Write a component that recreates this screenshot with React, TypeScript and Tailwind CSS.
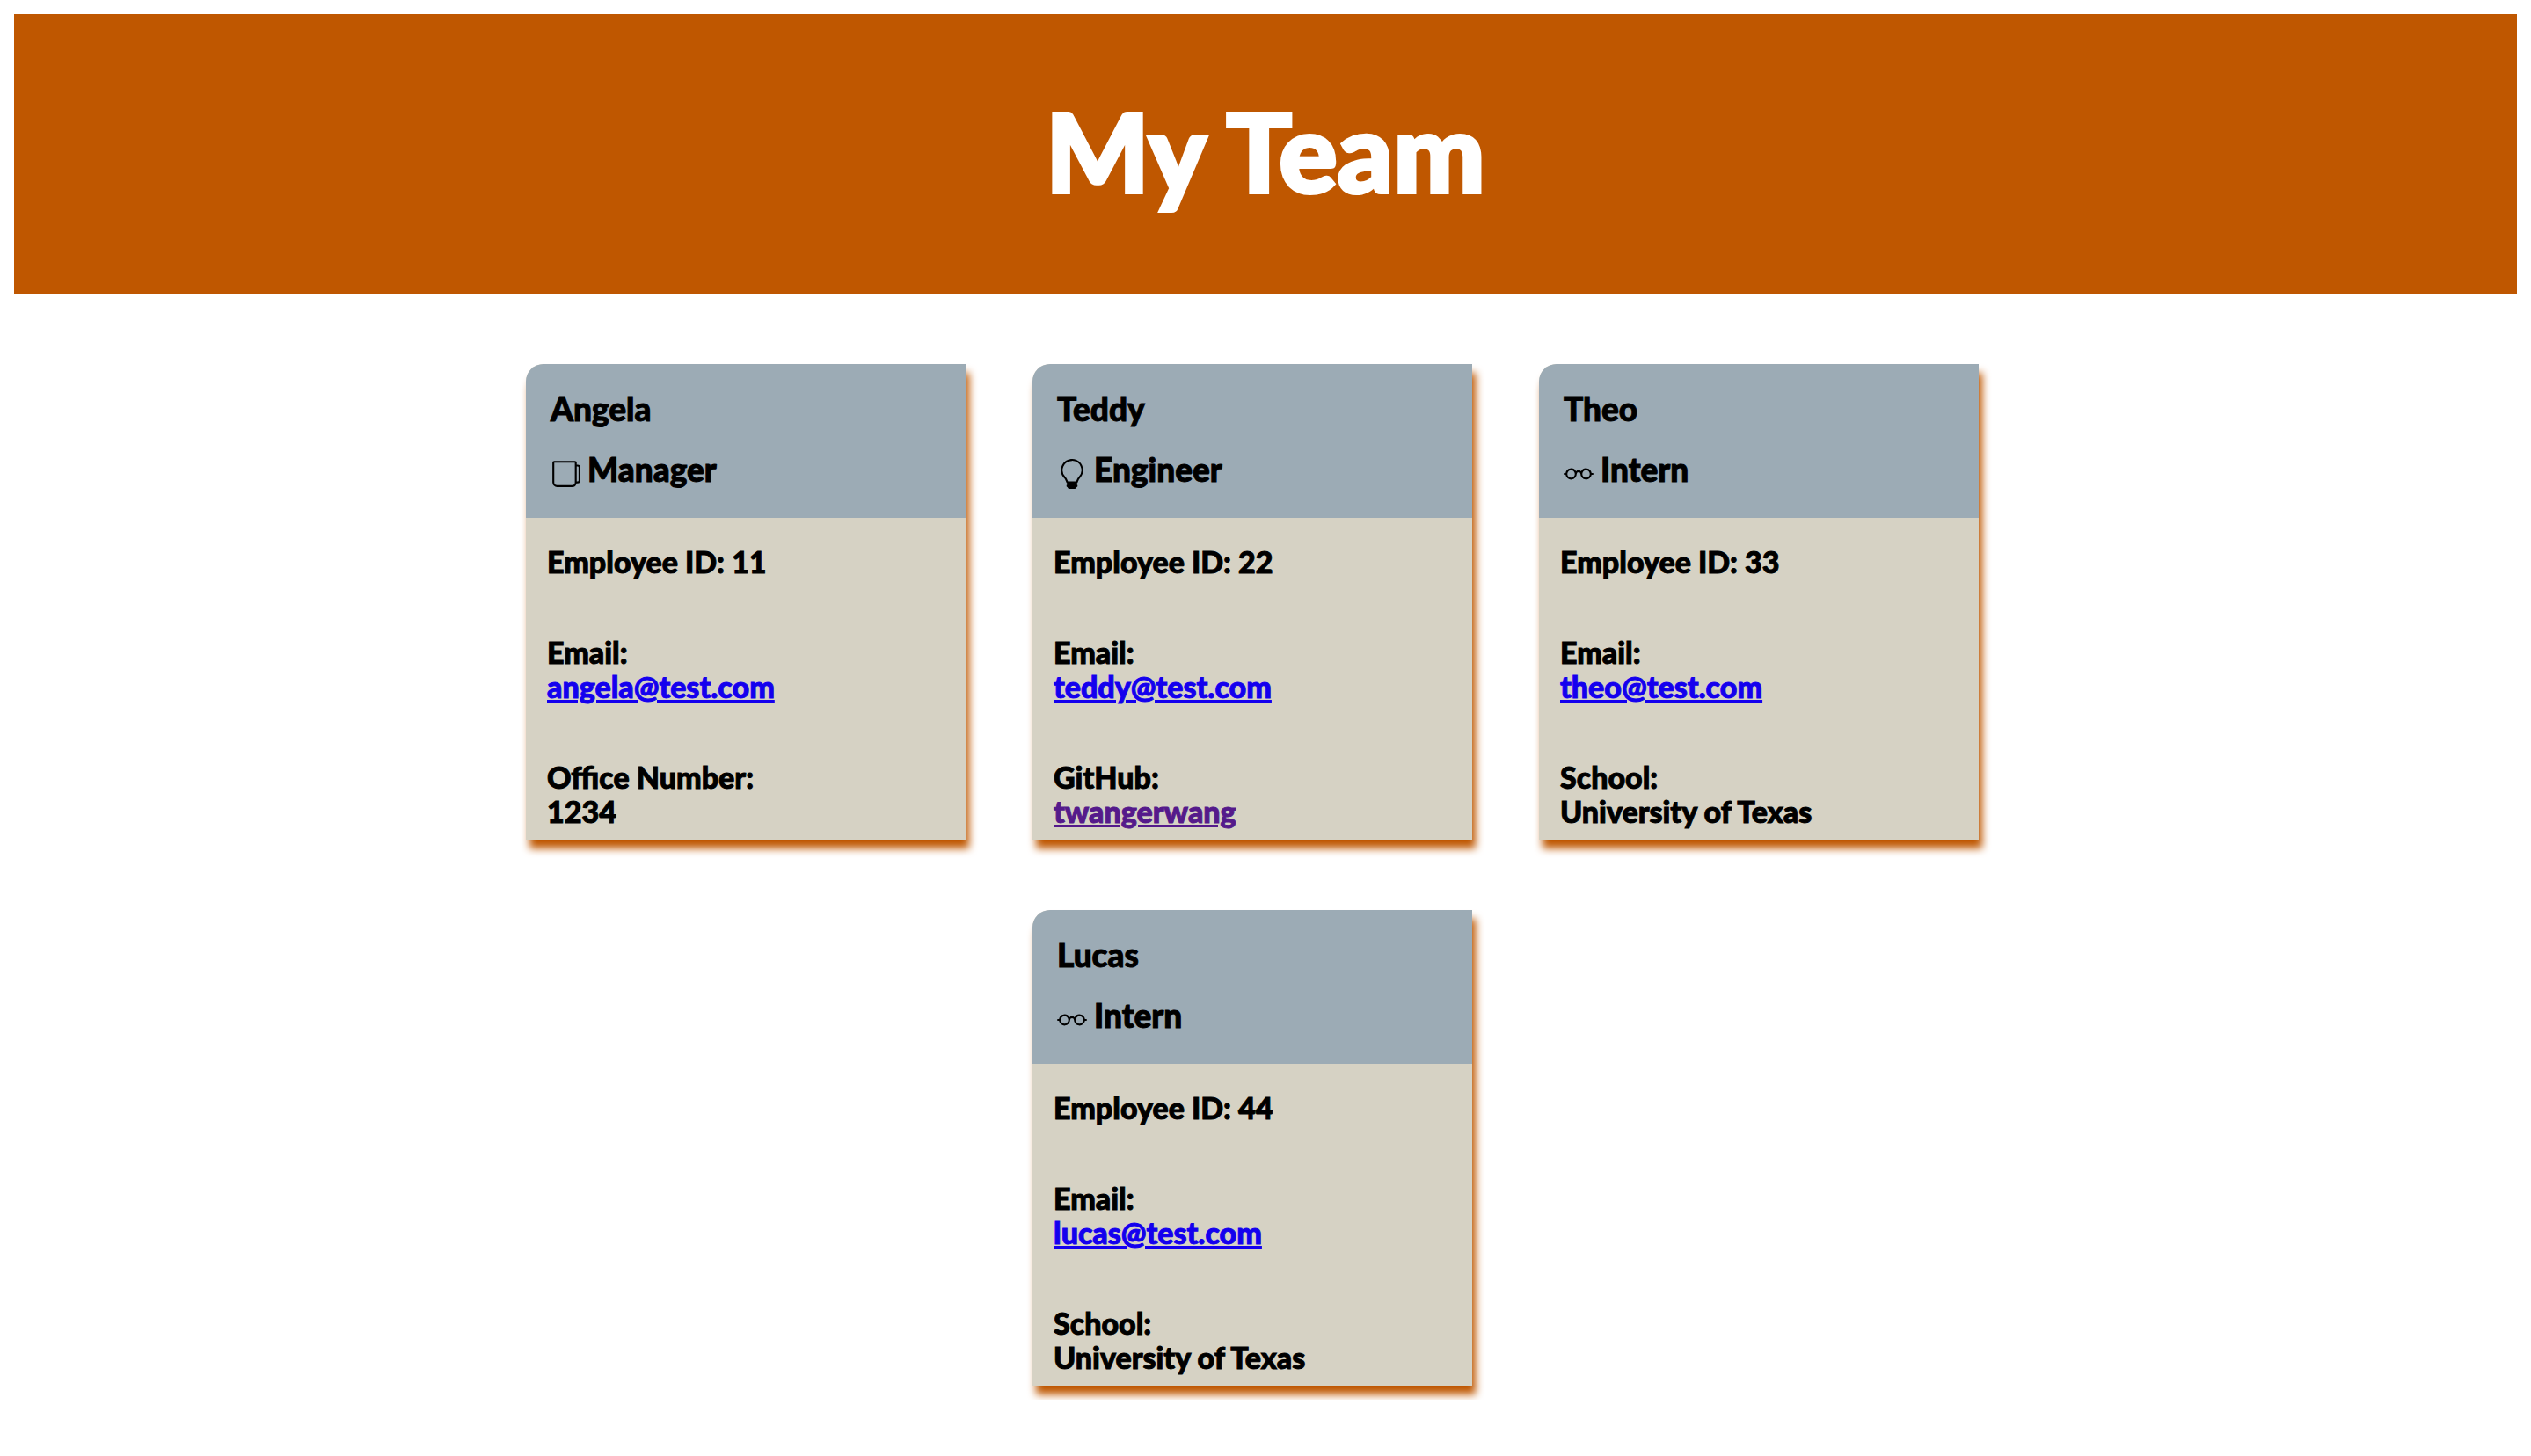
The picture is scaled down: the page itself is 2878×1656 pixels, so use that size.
import { BsEyeglasses, BsLightbulb } from "react-icons/bs";
import type { ComponentType, SVGProps } from "react";

type Role = "Manager" | "Engineer" | "Intern";

type Member = {
  name: string;
  role: Role;
  id: number;
  email: string;
  label: string;
  value: string;
  href?: string;
};

function Mug(props: SVGProps<SVGSVGElement>) {
  return (
    <svg viewBox="0 0 16 16" fill="currentColor" {...props}>
      <path
        fillRule="evenodd"
        d="M1 2a1 1 0 0 1 1-1h11a1 1 0 0 1 1 1v1h.5A1.5 1.5 0 0 1 16 4.5v7a1.5 1.5 0 0 1-1.5 1.5h-.55a2.5 2.5 0 0 1-2.45 2h-8A2.5 2.5 0 0 1 1 12.5V2zm13 10h.5a.5.5 0 0 0 .5-.5v-7a.5.5 0 0 0-.5-.5H14v8zM13 2H2v10.5A1.5 1.5 0 0 0 3.5 14h8a1.5 1.5 0 0 0 1.5-1.5V2z"
      />
    </svg>
  );
}

const icons: Record<Role, ComponentType<SVGProps<SVGSVGElement>>> = {
  Manager: Mug,
  Engineer: BsLightbulb,
  Intern: BsEyeglasses,
};

const members: Member[] = [
  { name: "Angela", role: "Manager", id: 11, email: "angela@test.com", label: "Office Number:", value: "1234" },
  { name: "Teddy", role: "Engineer", id: 22, email: "teddy@test.com", label: "GitHub:", value: "twangerwang", href: "https://github.com/twangerwang" },
  { name: "Theo", role: "Intern", id: 33, email: "theo@test.com", label: "School:", value: "University of Texas" },
  { name: "Lucas", role: "Intern", id: 44, email: "lucas@test.com", label: "School:", value: "University of Texas" },
];

function Card({ member }: { member: Member }) {
  const Icon = icons[member.role];
  return (
    <article className="w-[500px] rounded-tl-[20px] bg-[#d6d2c4] shadow-[4px_10px_10px_#bf5700] [-webkit-text-stroke-width:1px]">
      <header className="flex flex-col gap-[25px] rounded-tl-[20px] bg-[#9cabb5] px-7 pt-[29px] pb-[33px] text-[37px] leading-[44px]">
        <h2>{member.name}</h2>
        <h3 className="flex items-end gap-2">
          <Icon className="size-[34px]" aria-hidden="true" />
          {member.role}
        </h3>
      </header>
      <div className="flex flex-col gap-16 px-6 pt-[30px] pb-[13px] text-[34px] leading-[39px]">
        <p>Employee ID: {member.id}</p>
        <p>
          Email:
          <br />
          <a href={`mailto:${member.email}`} className="text-[#1400ee] underline decoration-3">
            {member.email}
          </a>
        </p>
        <p>
          {member.label}
          <br />
          {member.href ? (
            <a href={member.href} className="text-[#551a8b] underline decoration-3">
              {member.value}
            </a>
          ) : (
            member.value
          )}
        </p>
      </div>
    </article>
  );
}

export default function App() {
  return (
    <div className="bg-white p-4 font-['Lato',sans-serif] font-black text-black">
      <header className="bg-[#bf5700] px-8 pt-19 pb-21 text-center text-white">
        <h1 className="text-[124px] leading-[158px] [-webkit-text-stroke-width:4px]">My Team</h1>
      </header>
      <main className="mx-auto flex max-w-[1800px] flex-wrap justify-center gap-x-19 gap-y-20 pt-20 pr-[30px]">
        {members.map((member) => (
          <Card key={member.id} member={member} />
        ))}
      </main>
    </div>
  );
}
